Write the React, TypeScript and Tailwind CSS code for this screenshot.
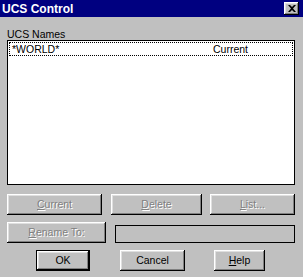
import React from 'react';

const bevel =
  'shadow-[inset_-1px_-1px_#000,inset_1px_1px_#fff,inset_-2px_-2px_#808080,inset_2px_2px_#dfdfdf]';

const Btn: React.FC<{
  label: string;
  hot?: number;
  disabled?: boolean;
  isDefault?: boolean;
  className?: string;
}> = ({ label, hot, disabled, isDefault, className = '' }) => {
  const text =
    hot === undefined ? (
      label
    ) : (
      <>
        {label.slice(0, hot)}
        <span className="underline underline-offset-[1px]">{label[hot]}</span>
        {label.slice(hot + 1)}
      </>
    );
  return (
    <div
      className={`h-[21px] flex items-center justify-center bg-[#c0c0c0] ${
        isDefault ? 'border border-black' : ''
      } ${className}`}
    >
      <div className={`w-full h-full flex items-center justify-center ${bevel}`}>
        <span
          className={
            disabled
              ? 'text-[#808080] [text-shadow:1px_1px_0_#fff]'
              : 'text-black'
          }
        >
          {text}
        </span>
      </div>
    </div>
  );
};

export default function App() {
  return (
    <div className="w-[303px] h-[277px] bg-[#c0c0c0] overflow-hidden text-[10.5px] leading-[13px] font-['Liberation_Sans',Arial,sans-serif] text-black">
      {/* Title bar */}
      <div className="h-[17px] bg-[#000080] flex items-center justify-between pl-[2px] pr-[4px]">
        <span className="text-white font-bold text-[12px] leading-[14px]">UCS Control</span>
        <div className={`w-[15px] h-[13px] bg-[#c0c0c0] flex items-center justify-center ${bevel}`}>
          <svg width="8" height="7" viewBox="0 0 8 7" className="mb-[1px]">
            <path d="M0 0h2l2 2 2-2h2L5 3.5 8 7H6L4 5 2 7H0l3-3.5z" fill="#000" />
          </svg>
        </div>
      </div>

      <div className="pl-[7px] pr-[8px]">
        <div className="mt-[11px] h-[12px] leading-[12px]">UCS Names</div>

        {/* List */}
        <div className="h-[145px] border border-black bg-white">
          <div className="mx-px mt-px h-[14px] border border-dotted border-black flex items-center pl-[2px]">
            <span className="w-[201px]">*WORLD*</span>
            <span>Current</span>
          </div>
        </div>

        <div className="mt-[9px] flex">
          <Btn label="Current" hot={0} disabled className="w-[95px]" />
          <Btn label="Delete" hot={0} disabled className="w-[91px] ml-[9px]" />
          <Btn label="List..." hot={0} disabled className="w-[85px] ml-[8px]" />
        </div>

        <div className="mt-[7px] flex items-end">
          <Btn label="Rename To:" hot={0} disabled className="w-[99px]" />
          <div className="ml-[9px] flex-1 h-[18px] border border-black bg-[#c0c0c0]" />
        </div>

        <div className="mt-[7px] flex">
          <Btn label="OK" isDefault className="w-[54px] ml-[29px]" />
          <Btn label="Cancel" className="w-[65px] ml-[30px]" />
          <Btn label="Help" hot={0} className="w-[51px] ml-[29px]" />
        </div>
      </div>
    </div>
  );
}
